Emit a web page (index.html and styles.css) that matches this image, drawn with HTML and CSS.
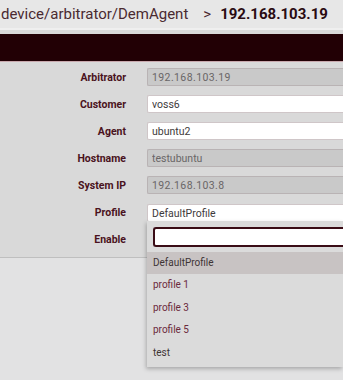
FILE: index.html
```html
<!DOCTYPE html>
<html lang="en">
<head>
    <meta charset="UTF-8">
    <meta name="viewport" content="width=device-width, initial-scale=1.0">
    <title>DemAgent</title>
    <link rel="stylesheet" href="styles.css">
</head>
<body>
    <div class="crumbs">
        <span class="path">device/arbitrator/DemAgent</span>
        <span class="sep">&gt;</span>
        <span class="current">192.168.103.19</span>
    </div>
    <div class="toolbar"></div>

    <form class="agent-form">
        <div class="row">
            <label>Arbitrator</label>
            <input class="field ip" type="text" value="192.168.103.19" disabled>
        </div>
        <div class="row">
            <label>Customer</label>
            <input class="field" type="text" value="voss6">
        </div>
        <div class="row">
            <label>Agent</label>
            <input class="field" type="text" value="ubuntu2">
        </div>
        <div class="row">
            <label>Hostname</label>
            <input class="field" type="text" value="testubuntu" disabled>
        </div>
        <div class="row">
            <label>System IP</label>
            <input class="field ip" type="text" value="192.168.103.8" disabled>
        </div>
        <div class="row">
            <label>Profile</label>
            <div class="select">
                <input class="field" type="text" value="DefaultProfile">
                <!-- open dropdown -->
                <div class="dropdown">
                    <div class="search"><input type="text"></div>
                    <ul class="options">
                        <li class="active">DefaultProfile</li>
                        <li class="tinted">profile 1</li>
                        <li class="tinted">profile 3</li>
                        <li class="tinted">profile 5</li>
                        <li>test</li>
                    </ul>
                </div>
            </div>
        </div>
        <div class="row">
            <label>Enable</label>
            <div class="field-blank"></div>
        </div>
    </form>
</body>
</html>
```

FILE: styles.css
```css
html, body {
    margin: 0;
    padding: 0;
}

body {
    font-family: Roboto, "Liberation Sans", Arial, sans-serif;
    background-color: #e2e2e3;
    width: 343px;
    height: 380px;
    overflow: hidden;
}

.crumbs {
    height: 28px;
    display: flex;
    align-items: center;
    padding-left: 1px;
    font-size: 15px;
    color: #4a2a31;
    background-color: #e7e7e7;
    border-bottom: 2px solid #efefef;
    white-space: nowrap;
}

.crumbs .sep {
    margin: 0 9px 0 15px;
}

.crumbs .current {
    font-weight: bold;
    color: #2a0b12;
}

.toolbar {
    height: 4px;
    background-color: #d9d9d9;
    border-bottom: 27px solid #220005;
}

.agent-form {
    background-color: #d9d9d9;
    border-top: 1px solid #c9a9ae;
    border-bottom: 1px solid #bfbfbf;
    padding: 6px 0 9px 0;
    display: flex;
    flex-direction: column;
    gap: 9px;
}

.row {
    display: flex;
    align-items: center;
    gap: 21px;
    height: 18px;
}

.row label {
    flex: none;
    width: 126px;
    text-align: right;
    font-size: 10.5px;
    font-weight: bold;
    color: #4a1220;
}

/* fields run off the right edge of the window */
.field {
    flex: none;
    box-sizing: border-box;
    width: 196px;
    height: 18px;
    margin: 0;
    padding: 0 4px;
    font-family: Roboto, "Liberation Sans", Arial, sans-serif;
    font-size: 10.5px;
    color: #3e3a3b;
    background-color: #ffffff;
    border: 1px solid #cfc6c8;
    border-right: none;
    border-radius: 2px 0 0 2px;
}

.field:disabled {
    background-color: #c9c9c9;
    border-color: #b9b3b4;
    color: #6a6667;
}

.field.ip {
    letter-spacing: 0.4px;
}

.field-blank {
    flex: none;
    width: 196px;
    height: 18px;
}

.select {
    flex: none;
    position: relative;
}

.dropdown {
    position: absolute;
    top: 19px;
    left: 0;
    width: 196px;
    background-color: #dbdbdb;
    box-shadow: -1px 2px 4px rgba(0, 0, 0, 0.25);
    padding: 6px 0 3px 0;
    z-index: 5;
}

.search {
    padding: 0 0 5px 6px;
}

.search input {
    box-sizing: border-box;
    display: block;
    width: 190px;
    height: 20px;
    margin: 0;
    background-color: #ffffff;
    border: 2px solid #3a0c16;
    border-right: none;
    border-radius: 3px 0 0 3px;
}

.options {
    list-style: none;
    margin: 0;
    padding: 0;
}

.options li {
    height: 22.5px;
    line-height: 22.5px;
    padding-left: 6px;
    font-size: 10px;
    color: #3e3435;
}

.options li.active {
    background-color: #c8c3c3;
}

.options li.tinted {
    color: #6b2a3c;
}
```
